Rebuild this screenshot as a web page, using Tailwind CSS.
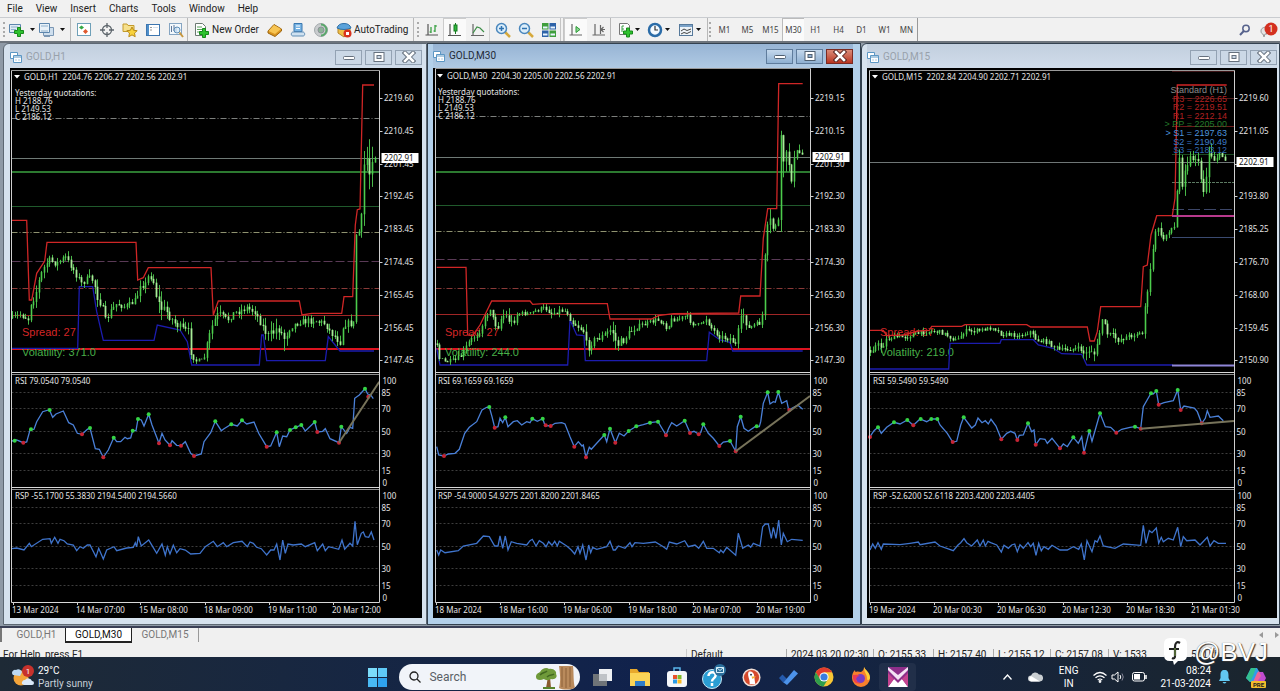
<!DOCTYPE html>
<html lang="en">
<head>
    <meta charset="UTF-8">
    <meta name="viewport" content="width=device-width, initial-scale=1.0">
    <title>MetaTrader - GOLD</title>
    <script src="https://cdn.jsdelivr.net/npm/@tailwindcss/browser@4"></script>
</head>
<body class="min-h-screen flex flex-col bg-[#f0f0f0] text-[#222] text-[10px] leading-3 font-['Roboto',sans-serif] overflow-x-hidden">

    <!-- Menu -->
    <nav class="flex items-center gap-[13px] h-[18px] pl-[7px] bg-[#f1f1f1] border-b border-[#c9ccd0]">
        <a href="#">File</a>
        <a href="#">View</a>
        <a href="#">Insert</a>
        <a href="#">Charts</a>
        <a href="#">Tools</a>
        <a href="#">Window</a>
        <a href="#">Help</a>
    </nav>

    <!-- Toolbar -->
    <div class="flex items-stretch h-[23px] bg-[#f1f1f1]">
        <div class="w-2 pl-[3px] py-1"><div class="h-full border-l-2 border-dotted border-[#aaa]"></div></div>
        <div class="flex pr-0.5">
            <button class="w-[30px] flex items-center gap-0.5" aria-label="New chart">
                <svg class="size-4" viewBox="0 0 16 16"><path d="M1.500 2.500h11v8h-11z" fill="#dfeaf4" stroke="#5c86ad"/><path d="M3 5h7M3 7.500h5" stroke="#8fb0cc"/><path d="M9.500 5.500h3v3h3v3h-3v3h-3v-3h-3v-3h3z" fill="#2ec22e" stroke="#178a1b"/></svg>
                <svg class="w-[5px] h-[3px] ml-1" viewBox="0 0 5 3"><path d="M0 0h5L2.500 3z" fill="#111"/></svg>
            </button>
            <button class="w-[30px] flex items-center gap-0.5" aria-label="Profiles">
                <svg class="size-4" viewBox="0 0 16 16"><path d="M5.500 5.500h10v8h-10z" fill="#cfdfee" stroke="#7b97b4"/><path d="M1.500 1.500h10v9h-10z" fill="#e8f1f8" stroke="#5c86ad"/><path d="M3 9h7M3 4h7" stroke="#8fb0cc"/><path d="M6 14.500h6" stroke="#7b97b4"/></svg>
                <svg class="w-[5px] h-[3px] ml-1" viewBox="0 0 5 3"><path d="M0 0h5L2.500 3z" fill="#111"/></svg>
            </button>
        </div>
        <div class="w-0.5 border-l border-[#b8b8b8]"></div>
        <div class="flex">
            <button class="w-[23px] grid place-items-center" aria-label="Market watch">
                <svg class="size-4" viewBox="0 0 16 16"><rect x="1.500" y="1.500" width="13" height="12" fill="#fff" stroke="#6fa0b8"/><path d="M3 5.500L5.500 3.500 8 5.500 5.500 7.500z" fill="#35a845"/><path d="M7 9.500l2.500-2.500L12 9.500 9.500 12z" fill="#e0592e"/></svg>
            </button>
            <button class="w-[23px] grid place-items-center" aria-label="Data window">
                <svg class="size-4" viewBox="0 0 16 16" fill="none" stroke="#5e666c" stroke-width="1.300"><circle cx="8" cy="8" r="4.500"/><path d="M8 1v5M8 10v5M1 8h5M10 8h5"/></svg>
            </button>
            <button class="w-[23px] grid place-items-center" aria-label="Navigator">
                <svg class="size-4" viewBox="0 0 16 16"><path d="M1 2h4l1 1.500h6v6H1z" fill="#f6e08c" stroke="#c39a2c"/><path d="M10 5l1.600 3.300 3.600.400-2.700 2.400.700 3.600L10 12.900l-3.200 1.800.7-3.600-2.700-2.400 3.600-.4z" fill="#f8d23c" stroke="#b98a16"/></svg>
            </button>
            <button class="w-[23px] grid place-items-center" aria-label="Terminal">
                <svg class="size-4" viewBox="0 0 16 16"><rect x="1.500" y="2.500" width="13" height="11" fill="#fff" stroke="#3d76b0"/><path d="M2 3h2v10H2z" fill="#4f8fca"/><path d="M5.500 5.500h1M5.500 8h1" stroke="#333"/><path d="M8 5.500h5" stroke="#d3dfec"/></svg>
            </button>
            <button class="w-[23px] grid place-items-center" aria-label="Strategy tester">
                <svg class="size-4" viewBox="0 0 16 16"><rect x="1.500" y="1.500" width="12" height="11" fill="#f3f8fc" stroke="#86a5c2"/><path d="M3.500 4v6M6 3v6M8 5v5" stroke="#60789a"/><circle cx="9" cy="8" r="3" fill="#d5eaf8" fill-opacity=".7" stroke="#5d8db8"/><path d="M11.500 10.500L15 15" stroke="#c8973c" stroke-width="2"/></svg>
            </button>
        </div>
        <div class="w-0.5 border-l border-[#b8b8b8]"></div>
        <button class="w-[74px] flex items-center gap-[3px] pl-1">
            <svg class="size-4" viewBox="0 0 16 16"><path d="M2.500 1.500h7l3 3v9h-10z" fill="#fff" stroke="#6c7a72"/><path d="M4 5h5M4 7.500h6M4 10h4" stroke="#5ba25e"/><path d="M9.500 6.500h3v3h3v3h-3v3h-3v-3h-3v-3h3z" fill="#2ec22e" stroke="#178a1b"/></svg>
            New Order
        </button>
        <div class="flex">
            <button class="w-[23px] grid place-items-center" aria-label="MetaEditor">
                <svg class="size-4" viewBox="0 0 16 16"><path d="M1 9l6-6.500 7.500 4.500v2L8 14.500 1 11z" fill="#d9941f" stroke="#9c640e"/><path d="M1.500 9L7 3l7 4-6 5z" fill="#f7c553"/></svg>
            </button>
            <button class="w-[23px] grid place-items-center" aria-label="Signals">
                <svg class="size-4" viewBox="0 0 16 16"><path d="M4 1.500h8v8H4z" fill="#78b4e4" stroke="#3a78b0"/><path d="M6 4h4M6 6.500h4" stroke="#fff"/><path d="M3 10c-2 0-2.500 4 0 4h10c2.500 0 2-4 0-4z" fill="#cfe1f0" stroke="#5f8db5"/></svg>
            </button>
            <button class="w-[23px] grid place-items-center" aria-label="Community">
                <svg class="size-4" viewBox="0 0 16 16"><circle cx="8" cy="8" r="6.500" fill="#c9ccce" stroke="#a3a9ac"/><path d="M8 2.500a5.500 5.500 0 010 11" fill="none" stroke="#59a86a" stroke-width="2"/><circle cx="8" cy="8" r="3" fill="#8fb39a" stroke="#8b9397"/></svg>
            </button>
        </div>
        <button class="w-[81px] flex items-center gap-0.5 pl-1">
            <svg class="size-4" viewBox="0 0 16 16"><path d="M2 6h12v4l-6 5-6-4z" fill="#f0c048" stroke="#b5862a"/><path d="M1 6c1-3 3-4.500 7-4.500S14 3 15 6c-3 2-11 2-14 0z" fill="#5aa2da" stroke="#2f70a8"/><circle cx="11.500" cy="11.500" r="4" fill="#d8321e"/><path d="M10 10h3v3h-3z" fill="#fff"/></svg>
            AutoTrading
        </button>
        <div class="w-0.5 border-l border-[#b8b8b8]"></div>
        <div class="w-[5px] pl-0.5 py-1"><div class="h-full border-l-2 border-dotted border-[#aaa]"></div></div>
        <div class="flex">
            <button class="w-[23px] grid place-items-center" aria-label="Bar chart">
                <svg class="size-4" viewBox="0 0 16 16" fill="none" stroke-width="1.200"><path d="M4 2v11M1.500 13H14" stroke="#555"/><path d="M7 5v6M5.500 10H7M11 3v7M9.500 9H11M11 4h2" stroke="#2a9a35"/></svg>
            </button>
            <button class="w-[23px] grid place-items-center bg-[#fafafa] border-l border-t border-[#ccc]" aria-label="Candlesticks">
                <svg class="size-4" viewBox="0 0 16 16"><path d="M3 2v11M1 13.500h13" stroke="#555" stroke-width="1.200"/><path d="M8.500 1v11" stroke="#157a1e"/><rect x="7" y="3" width="3" height="6" fill="#2fb53c" stroke="#157a1e"/></svg>
            </button>
            <button class="w-[23px] grid place-items-center" aria-label="Line chart">
                <svg class="size-4" viewBox="0 0 16 16" fill="none" stroke-width="1.200"><path d="M3 2v11M1 13.500h13" stroke="#666"/><path d="M3 11l4-6 3 1 4 4" stroke="#3d8e48"/></svg>
            </button>
        </div>
        <div class="w-0.5 border-l border-[#d0d0d0]"></div>
        <div class="flex">
            <button class="w-[23px] grid place-items-center" aria-label="Zoom in">
                <svg class="size-4" viewBox="0 0 16 16"><path d="M9.500 9.500L15 15" stroke="#d6a93c" stroke-width="2.500"/><circle cx="6.500" cy="6.500" r="5" fill="#dceefa" stroke="#4a87bd" stroke-width="1.500"/><path d="M4 6.500h5M6.500 4v5" stroke="#2f72b0" stroke-width="1.500"/></svg>
            </button>
            <button class="w-[23px] grid place-items-center" aria-label="Zoom out">
                <svg class="size-4" viewBox="0 0 16 16"><path d="M9.500 9.500L15 15" stroke="#d6a93c" stroke-width="2.500"/><circle cx="6.500" cy="6.500" r="5" fill="#dceefa" stroke="#4a87bd" stroke-width="1.500"/><path d="M4 6.500h5" stroke="#2f72b0" stroke-width="1.500"/></svg>
            </button>
            <button class="w-[23px] grid place-items-center" aria-label="Tile windows">
                <svg class="size-4" viewBox="0 0 16 16"><rect x="1" y="1" width="6.500" height="6.500" fill="#3f9e3c"/><rect x="8.500" y="1" width="6.500" height="6.500" fill="#2d62a8"/><rect x="1" y="8.500" width="6.500" height="6.500" fill="#2d62a8"/><rect x="8.500" y="8.500" width="6.500" height="6.500" fill="#3f9e3c"/><path d="M2 5.500h4.500M9.500 5.500H14M2 12.500h4.500M9.500 12.500H14" stroke="#e8f4ff" stroke-width="2"/></svg>
            </button>
        </div>
        <div class="w-1 border-x border-[#c4c4c4]"></div>
        <div class="flex">
            <button class="w-[23px] grid place-items-center bg-[#fafafa] border-l border-t border-[#ccc]" aria-label="Auto scroll">
                <svg class="size-4" viewBox="0 0 16 16"><path d="M4 2v11M1.500 13H14" fill="none" stroke="#666" stroke-width="1.200"/><path d="M8 4.500l4 3-4 3z" fill="#8ed694" stroke="#2a9a35"/></svg>
            </button>
            <button class="w-[23px] grid place-items-center" aria-label="Chart shift">
                <svg class="size-4" viewBox="0 0 16 16" fill="none" stroke="#666" stroke-width="1.200"><path d="M4 2v11M1.500 13H14M9.500 3v9M14 7.500H10M12.500 5L10 7.500l2.500 2.500"/></svg>
            </button>
        </div>
        <div class="w-0.5 border-l border-[#b8b8b8]"></div>
        <div class="flex pl-[5px]">
            <button class="w-[30px] flex items-center gap-0.5" aria-label="Indicators">
                <svg class="size-4" viewBox="0 0 16 16"><path d="M2.500 1.500h8l2 2v9h-10z" fill="#fff" stroke="#777"/><path d="M5 4v6M5 4h2M5 7h2" stroke="#3c9e46"/><path d="M9.500 6h3v3h3v3h-3v3h-3v-3h-3V9h3z" fill="#2ec22e" stroke="#178a1b"/></svg>
                <svg class="w-[5px] h-[3px]" viewBox="0 0 5 3"><path d="M0 0h5L2.500 3z" fill="#111"/></svg>
            </button>
            <button class="w-[31px] flex items-center gap-0.5" aria-label="Periods">
                <svg class="size-4" viewBox="0 0 16 16"><circle cx="8" cy="8" r="6" fill="#f4faff" stroke="#2b6ca8" stroke-width="2.500"/><path d="M8 4v4h3" fill="none" stroke="#333" stroke-width="1.200"/></svg>
                <svg class="w-[5px] h-[3px]" viewBox="0 0 5 3"><path d="M0 0h5L2.500 3z" fill="#111"/></svg>
            </button>
            <button class="w-[29px] flex items-center gap-0.5" aria-label="Templates">
                <svg class="size-4" viewBox="0 0 16 16"><rect x="1.500" y="2.500" width="13" height="11" fill="#eef4f9" stroke="#56799b"/><path d="M2 4h12" stroke="#7ba2c8" stroke-width="2"/><path d="M3 9l3-2 3 1.500L13 7M3 12l3-1.500 3 1 4-2" fill="none" stroke="#444"/></svg>
                <svg class="w-[5px] h-[3px]" viewBox="0 0 5 3"><path d="M0 0h5L2.500 3z" fill="#111"/></svg>
            </button>
        </div>
        <div class="w-0.5 border-l border-[#b8b8b8]"></div>
        <div class="w-1 py-1"><div class="h-full border-l-2 border-dotted border-[#aaa]"></div></div>
        <div class="flex text-[8px] text-[#444] font-['Noto_Sans',sans-serif]">
            <button class="w-[23px]">M1</button>
            <button class="w-[23px]">M5</button>
            <button class="w-[23px]">M15</button>
            <button class="w-[22px] bg-[#fafafa] border-l border-t border-[#bbb]">M30</button>
            <button class="w-[23px]">H1</button>
            <button class="w-[23px]">H4</button>
            <button class="w-[23px]">D1</button>
            <button class="w-[23px]">W1</button>
            <button class="w-[21px]">MN</button>
        </div>
        <div class="w-0.5 border-l border-[#999]"></div>
        <button class="ml-auto w-6 grid place-items-center" aria-label="Search">
            <svg class="size-3" viewBox="0 0 12 12" fill="none" stroke="#56628c"><circle cx="7" cy="4.500" r="3.200" stroke-width="1.500"/><path d="M4.800 7L1 11" stroke-width="2"/></svg>
        </button>
        <button class="w-[23px] grid place-items-center" aria-label="Messages">
            <svg class="w-[18px] h-4" viewBox="0 0 18 16"><path d="M1 9c0-3 3-4 6-4v7H5l-1 3-1-3c-1 0-2-1-2-3z" fill="#e4e4e4" stroke="#999"/><circle cx="11" cy="7" r="6.500" fill="#d3301f"/><text x="11" y="10" fill="#fff" font-size="9" text-anchor="middle">1</text></svg>
        </button>
    </div>

    <!-- Chart windows -->
    <main class="flex-1 grid grid-cols-[427fr_434fr_419fr] border-t-2 border-[#6d747c] bg-[#8f9aa6] pb-px">

        <section class="ml-[3px] flex flex-col border border-[#5d6873] rounded-tl-md bg-[#d6e2ee] pl-1.5 pr-1 pb-1.5">
            <header class="flex items-center h-6 pt-0.5 bg-gradient-to-b from-[#c2cfde] to-[#d0dcea] text-[#98a1ab]">
                <svg class="size-3 mr-1" viewBox="0 0 12 12" fill="#fff" stroke="#5c97c4"><path d="M.500 1.500h7v6h-7z"/><path d="M3.500 4.500h8v7h-8z"/><path d="M4 6h7M5.500 9h1M8.500 9h1" /></svg>
                <h2>GOLD,H1</h2>
                <div class="ml-auto flex gap-[3px]">
                    <button class="w-[27px] h-[15px] grid place-items-center border border-[#93a2b3] bg-[#cbd8e6]" aria-label="Minimize"><svg class="w-3 h-2.5" viewBox="0 0 12 10"><rect x=".500" y="4.500" width="11" height="3" rx="1" fill="#fff" stroke="#66717e"/></svg></button>
                    <button class="w-[27px] h-[15px] grid place-items-center border border-[#93a2b3] bg-[#cbd8e6]" aria-label="Maximize"><svg class="w-3 h-2.5" viewBox="0 0 12 10"><rect x="1" y=".500" width="10" height="9" fill="#fff" stroke="#66717e"/><rect x="4" y="3.500" width="4" height="3" fill="#cbd8e6" stroke="#66717e"/></svg></button>
                    <button class="w-[27px] h-[15px] grid place-items-center border border-[#93a2b3] bg-[#cbd8e6]" aria-label="Close"><svg class="w-3.5 h-3" viewBox="0 0 14 12"><path d="M3 2l8 8M11 2L3 10" stroke="#66717e" stroke-width="4.500" stroke-linecap="square"/><path d="M3 2l8 8M11 2L3 10" stroke="#fff" stroke-width="2.500" stroke-linecap="square"/></svg></button>
                </div>
            </header>
            <div class="flex-1 bg-black"><svg id="chartH1" class="block w-full" viewBox="10 68 412 550"></svg></div>
        </section>

        <section class="flex flex-col border border-[#33414f] bg-[#b3d0ea] pl-[5px] pr-[7px] pb-1.5">
            <header class="flex items-center h-6 bg-gradient-to-b from-[#97b4d4] to-[#b0cae4] text-[#1f2a36]">
                <svg class="size-3 mr-1" viewBox="0 0 12 12" fill="#fff" stroke="#5c97c4"><path d="M.500 1.500h7v6h-7z"/><path d="M3.500 4.500h8v7h-8z"/><path d="M4 6h7M5.500 9h1M8.500 9h1" /></svg>
                <h2>GOLD,M30</h2>
                <div class="ml-auto flex gap-[3px]">
                    <button class="w-[27px] h-[15px] grid place-items-center border border-[#5f7c9c] bg-gradient-to-b from-[#c4d8ec] to-[#8fb0d2]" aria-label="Minimize"><svg class="w-3 h-2.5" viewBox="0 0 12 10"><rect x=".500" y="4.500" width="11" height="3" rx="1" fill="#fff" stroke="#4f5f70"/></svg></button>
                    <button class="w-[27px] h-[15px] grid place-items-center border border-[#5f7c9c] bg-gradient-to-b from-[#c4d8ec] to-[#8fb0d2]" aria-label="Maximize"><svg class="w-3 h-2.5" viewBox="0 0 12 10"><rect x="1" y=".500" width="10" height="9" fill="#fff" stroke="#4f5f70"/><rect x="4" y="3.500" width="4" height="3" fill="#8fb0d2" stroke="#4f5f70"/></svg></button>
                    <button class="w-[27px] h-[15px] grid place-items-center border border-[#7a2a22] bg-gradient-to-b from-[#d98a78] to-[#b8321e]" aria-label="Close"><svg class="w-3.5 h-3" viewBox="0 0 14 12"><path d="M3 2l8 8M11 2L3 10" stroke="#5b2a26" stroke-width="4.500" stroke-linecap="square"/><path d="M3 2l8 8M11 2L3 10" stroke="#fff" stroke-width="2.500" stroke-linecap="square"/></svg></button>
                </div>
            </header>
            <div class="flex-1 bg-black"><svg id="chartM30" class="block w-full" viewBox="433 68 420 550"></svg></div>
        </section>

        <section class="flex flex-col border border-[#33414f] rounded-tl-md bg-[#d6e2ee] pl-[5px] pr-0.5 pb-1.5">
            <header class="flex items-center h-6 pt-0.5 bg-gradient-to-b from-[#c2cfde] to-[#d0dcea] text-[#98a1ab]">
                <svg class="size-3 mr-1" viewBox="0 0 12 12" fill="#fff" stroke="#5c97c4"><path d="M.500 1.500h7v6h-7z"/><path d="M3.500 4.500h8v7h-8z"/><path d="M4 6h7M5.500 9h1M8.500 9h1" /></svg>
                <h2>GOLD,M15</h2>
                <div class="ml-auto flex gap-[3px]">
                    <button class="w-[27px] h-[15px] grid place-items-center border border-[#93a2b3] bg-[#cbd8e6]" aria-label="Minimize"><svg class="w-3 h-2.5" viewBox="0 0 12 10"><rect x=".500" y="4.500" width="11" height="3" rx="1" fill="#fff" stroke="#66717e"/></svg></button>
                    <button class="w-[27px] h-[15px] grid place-items-center border border-[#93a2b3] bg-[#cbd8e6]" aria-label="Maximize"><svg class="w-3 h-2.5" viewBox="0 0 12 10"><rect x="1" y=".500" width="10" height="9" fill="#fff" stroke="#66717e"/><rect x="4" y="3.500" width="4" height="3" fill="#cbd8e6" stroke="#66717e"/></svg></button>
                    <button class="w-[27px] h-[15px] grid place-items-center border border-[#93a2b3] bg-[#cbd8e6]" aria-label="Close"><svg class="w-3.5 h-3" viewBox="0 0 14 12"><path d="M3 2l8 8M11 2L3 10" stroke="#66717e" stroke-width="4.500" stroke-linecap="square"/><path d="M3 2l8 8M11 2L3 10" stroke="#fff" stroke-width="2.500" stroke-linecap="square"/></svg></button>
                </div>
            </header>
            <div class="flex-1 bg-black"><svg id="chartM15" class="block w-full" viewBox="867 68 410 550"></svg></div>
        </section>
    </main>

    <!-- Chart tabs -->
    <div class="flex items-start h-[18px] border-t-2 border-[#3a3f55] text-[#777]">
        <button class="w-[65px] h-[14px] pl-1.5 border-l-2 border-[#777]">GOLD,H1</button>
        <button class="w-[67px] h-[15px] bg-white text-[#111] border-x border-b-2 border-[#222]">GOLD,M30</button>
        <button class="w-[67px] h-[14px] border-r border-[#999]">GOLD,M15</button>
        <div class="ml-auto flex gap-3 pt-1 pr-px">
            <button aria-label="Scroll tabs left"><svg class="w-1 h-1.5" viewBox="0 0 4 6"><path d="M4 0v6L0 3z" fill="#999"/></svg></button>
            <button aria-label="Scroll tabs right"><svg class="w-1 h-1.5" viewBox="0 0 4 6"><path d="M0 0v6l4-3z" fill="#999"/></svg></button>
        </div>
    </div>

    <!-- Status bar -->
    <footer class="relative">
        <div class="flex h-[13px] overflow-hidden pt-[5px] pl-[3px] text-[#222]">
            <span class="flex-1">For Help, press F1</span>
            <span class="w-[100px] pl-1 border-l border-[#ccc]">Default</span>
            <span class="w-[87px] pl-1 border-l border-[#aaa] whitespace-nowrap">2024.03.20 02:30</span>
            <span class="w-[60px] pl-1 border-l border-[#aaa]">O: 2155.33</span>
            <span class="w-[60px] pl-1 border-l border-[#aaa]">H: 2157.40</span>
            <span class="w-[57px] pl-1 border-l border-[#aaa]">L: 2155.12</span>
            <span class="w-[58px] pl-1 border-l border-[#aaa]">C: 2157.08</span>
            <span class="w-[56px] pl-1 border-l border-[#aaa]">V: 1533</span>
            <span class="w-[116px] pl-[26px] border-l border-[#aaa]">5/0 kb</span>
        </div>
        <!-- Author mark floating over the status bar -->
        <div class="absolute right-3 -top-1.5 z-10 flex items-center gap-1.5 text-white">
            <svg class="w-[25px] h-[27px]" viewBox="0 0 25 27"><path d="M7 0h11q6 0 6 6v11q0 6-6 6h-3l-4 4-1-4H7q-6 0-6-6V6q0-6 6-6z" fill="#fff"/><path d="M17 5c-3-2-5 0-5 4v9c0 2-1 3-3 2M6 11h10" fill="none" stroke="#222" stroke-width="2.200"/><path d="M12 10v8" stroke="#7ea84a"/></svg>
            <span class="text-[26px] leading-6 font-['Liberation_Sans',sans-serif] [text-shadow:1px_1px_1px_#333,0_0_1px_#555]">@BVJ</span>
        </div>
    </footer>

    <!-- Taskbar -->
    <div class="grid grid-cols-[366fr_550fr_364fr] h-[34px] bg-gradient-to-r from-[#1e2a36] via-[#11224c] to-[#1b252d] text-white">
        <div class="flex items-center gap-1.5 pl-3 pt-1.5">
            <svg class="w-[22px] h-6" viewBox="0 0 22 24"><circle cx="9" cy="13" r="7.500" fill="#f3a43a"/><path d="M1 10a3 3 0 013-5 4 4 0 016 2l-2 4z" fill="#bcd8f2"/><path d="M10 19a3 3 0 013-4 4 4 0 017 1 2 2 0 010 4h-8z" fill="#dbe9f8"/><circle cx="16" cy="6" r="6" fill="#c7322c"/><text x="16" y="9" fill="#fff" font-size="8" text-anchor="middle">1</text></svg>
            <div class="leading-[13px] -ml-0.5">
                <div>29°C</div>
                <div class="text-[#c8d0d8]">Partly sunny</div>
            </div>
        </div>

        <div class="flex items-center pl-0.5 pt-1.5">
            <button class="mr-3 ml-px" aria-label="Start">
                <svg class="size-[19px]" viewBox="0 0 19 19" fill="#49b9f4"><path d="M0 0h9v9H0z" fill="#7cdcfa"/><path d="M10 0h9v9h-9z" fill="#5fcaf8"/><path d="M0 10h9v9H0z"/><path d="M10 10h9v9h-9z" fill="#2fa2ee"/></svg>
            </button>
            <label class="flex items-center w-[181px] h-[26px] pl-2.5 pr-0.5 rounded-full bg-[#f1f4f9] overflow-hidden">
                <svg class="size-3 shrink-0" viewBox="0 0 12 12" fill="none" stroke="#222" stroke-width="1.300"><circle cx="5" cy="5" r="4"/><path d="M8 8l3.500 3.500"/></svg>
                <input type="text" placeholder="Search" aria-label="Search" class="flex-1 min-w-0 ml-2 text-[12px] bg-transparent text-[#444] placeholder:text-[#5a5f66] outline-none">
                <svg class="w-[43px] h-[25px] shrink-0" viewBox="0 0 43 25"><path d="M24 1h14c1 7 0 15 2 22-4 2-12 2-16 0 2-7 1-15 0-22z" fill="#b98a5c"/><path d="M27 2v20M31 3v20M35 2v20" stroke="#8c6038"/><path d="M13 12l-2 11h5l-1-11z" fill="#8a5b2e"/><path d="M1 12c0-4 3-4 4-5 2-4 7-5 9-3 5-1 8 3 7 5 2 3-1 6-5 5-3 2-6 1-7 0-4 2-8 1-8-2z" fill="#6f9a3a"/><path d="M5 10c3-3 5-2 7-4M12 12c3-3 5-1 7-3" stroke="#426820" fill="none" stroke-width="1.500"/><path d="M8 23h12" stroke="#58842c" stroke-width="2"/></svg>
            </label>
            <div class="flex ml-1">
                <button class="w-[37px] grid place-items-center" aria-label="Task view"><svg class="size-5" viewBox="0 0 20 20"><rect x="0" y="7" width="14" height="12" fill="#6f7478"/><rect x="6" y="2" width="13" height="12" fill="#eef0f2"/><path d="M6 7h8v7H6z" fill="#bfc3c7"/></svg></button>
                <button class="w-[37px] grid place-items-center" aria-label="Explorer"><svg class="size-5" viewBox="0 0 20 20"><path d="M0 2h7l2 3h10v14H0z" fill="#e8a92c"/><path d="M0 6h20v13H0z" fill="#fbd457"/><path d="M5 19v-5h10v5z" fill="#2f7dc9"/></svg></button>
                <button class="w-[37px] grid place-items-center" aria-label="Store"><svg class="size-5" viewBox="0 0 20 20"><path d="M7 5V1h6v4" fill="none" stroke="#59b5ea" stroke-width="1.500"/><rect x="0" y="4" width="20" height="16" rx="3" fill="#f5f7fa"/><path d="M6 8h4v4H6z" fill="#e9512b"/><path d="M10.500 8h4v4h-4z" fill="#7fba2a"/><path d="M6 12.500h4v4H6z" fill="#2a9ce8"/><path d="M10.500 12.500h4v4h-4z" fill="#fbb924"/></svg></button>
                <button class="w-[38px] grid place-items-center" aria-label="Help"><svg class="w-6 h-[26px]" viewBox="0 0 24 26"><circle cx="10" cy="15" r="9.500" fill="#2a9ed4" stroke="#c7e8f6"/><path d="M6.500 12c0-5 8-5 7 0-.500 2.500-3.500 2.500-3.500 5.500M10 19v3" fill="none" stroke="#fff" stroke-width="2.500"/><circle cx="18" cy="6" r="6" fill="#2b6f9c"/><path d="M14.500 3.500h7v5h-7zl3.500 3 3.500-3" fill="none" stroke="#d7f0fb"/></svg></button>
                <button class="w-9 grid place-items-center" aria-label="DuckDuckGo"><svg class="size-[19px]" viewBox="0 0 20 20"><circle cx="10" cy="10" r="9.500" fill="#f2dfd6"/><circle cx="10" cy="10" r="8" fill="#d6492b"/><path d="M7 4c4-1 6 2 6 6l1 7H8C9 13 5 8 7 4z" fill="#fff"/><path d="M10 9h5l-4 2.500z" fill="#f5b731"/><circle cx="9.500" cy="7" r="1" fill="#234"/></svg></button>
                <button class="w-[37px] grid place-items-center" aria-label="To Do"><svg class="size-5" viewBox="0 0 20 20"><path d="M1 11l3.500-3.500L9 12l-3.500 4z" fill="#2459ab"/><path d="M5.500 15.500L16 3l4 3.500L9 18z" fill="#4d93ea"/></svg></button>
                <button class="w-9 grid place-items-center" aria-label="Chrome"><svg class="size-5" viewBox="0 0 20 20"><circle cx="10" cy="10" r="9.500" fill="#f9c734"/><path d="M1.800 5.200A9.500 9.500 0 0118.200 5.200H10L6 12.500z" fill="#e23c2e"/><path d="M1.800 5.200A9.500 9.500 0 009.500 19.500L14 12l-8 0z" fill="#2f9e4c"/><circle cx="10" cy="10" r="4.600" fill="#fff"/><circle cx="10" cy="10" r="3.600" fill="#3b7de0"/></svg></button>
                <button class="w-[37px] grid place-items-center" aria-label="Firefox"><svg class="size-5" viewBox="0 0 20 20"><path d="M13 0c1 3 6 5 6 11a9 9 0 01-18 0c0-4 1-6 3-8 0 2 1 2 1 2 2-1 3 0 5 0 2-1 3-3 3-5z" fill="#f8802c"/><path d="M13 0c1 3 6 5 6 11-1 3-3 3-3 0 0-4-3-5-3-11z" fill="#fbd03a"/><circle cx="9.500" cy="11.500" r="4.500" fill="#7a3cc4"/><path d="M2 8c2 0 4-1 7 1-3 0-3 1-4 3 0 3 3 4 5 4-5 2-9-2-8-8z" fill="#ee3a54"/></svg></button>
                <button class="w-[37px] h-7 grid place-items-center bg-white/5 rounded" aria-label="MetaTrader"><svg class="size-5" viewBox="0 0 20 20"><path d="M0 0h20v20H0z" fill="#8e2f8a"/><path d="M0 0l10 8L20 0v3L10 13 0 3z" fill="#f4e3f4"/><path d="M0 20l6-8 4 4 4-4 6 8z" fill="#fff"/><path d="M0 6l6 6-6 8zM20 6l-6 6 6 8z" fill="#c5428f"/></svg></button>
            </div>
        </div>

        <div class="flex items-center justify-end pr-3.5 pt-1.5">
            <svg class="w-[9px] h-1.5 mr-3" viewBox="0 0 9 6" fill="none" stroke="#fff" stroke-width="1.300"><path d="M.500 5.500l4-4.500 4 4.500"/></svg>
            <svg class="w-[15px] h-2.5 mr-4 ml-1" viewBox="0 0 15 10"><path d="M3 9.500a3 3 0 010-6 4.500 4.500 0 018-1 3.500 3.500 0 011 7z" fill="#c9ced2"/><path d="M3 4l9 5.500H3a3 3 0 010-5.500z" fill="#fff"/></svg>
            <div class="text-center leading-[13px] mr-3.5">
                <div>ENG</div>
                <div>IN</div>
            </div>
            <svg class="w-[14px] h-3 mr-1" viewBox="0 0 14 12" fill="none" stroke="#fff" stroke-width="1.200"><path d="M.500 4.500q6.500-6 13 0M2.500 6.800q4.500-4 9 0M4.700 9q2.300-2 4.600 0"/><circle cx="7" cy="10.500" r=".8"/></svg>
            <svg class="w-[15px] h-3 mr-1.5" viewBox="0 0 15 12" fill="none" stroke="#fff"><path d="M1 4h2.500L7 1v10L3.500 8H1z"/><path d="M9 4q1.500 2 0 4"/><path d="M11 2.500q2.500 3.500 0 7" stroke="#889"/></svg>
            <svg class="w-[15px] h-2.5 mr-3.5" viewBox="0 0 15 10"><rect x=".500" y=".500" width="12" height="8.500" rx="2" fill="none" stroke="#fff"/><rect x="2" y="2" width="6" height="5.500" fill="#fff"/><path d="M14 3v4" stroke="#fff" stroke-width="1.500"/></svg>
            <div class="text-right leading-[13px] mr-2">
                <div>08:24</div>
                <div>21-03-2024</div>
            </div>
            <svg class="w-[11px] h-[14px] mr-4" viewBox="0 0 11 14" fill="#62c8f2"><path d="M5.500 0C8.500 0 9.500 2 9.500 5v3l1.500 3H0l1.500-3V5c0-3 1-5 4-5z"/><path d="M3.500 12h4q-2 3-4 0z"/></svg>
            <svg class="w-5 h-[21px]" viewBox="0 0 20 21"><path d="M5 1h6l3 5-5 9H4L0 11z" fill="#2f9ee8"/><path d="M5 1h5L7 9 4 15 0 11z" fill="#34c08f"/><path d="M12 5h5l3 6-3 6H8z" fill="#c24bd0"/><path d="M13 4l2 5-4 6H7l4-9z" fill="#e9679a"/><rect x="5" y="14" width="15" height="7" rx="1" fill="#f3bd2c"/><text x="12.500" y="20" fill="#222" font-size="6" font-weight="bold" text-anchor="middle">PRE</text></svg>
        </div>
    </div>

    <script>
        // Chart data. Points are in thirds of a chart unit: price panel starts at y=65, indicator panels at y=370.
        const charts = [
            {
                id: "chartH1", ox: 0, left: 11.5, right: 379.5, top: 70.5, titleY: 80, textX: 15,
                title: "GOLD,H1\u00a0 2204.76 2206.27 2202.56 2202.91",
                prices: ["2219.60", "2210.45", "2201.45", "2192.45", "2183.45", "2174.45", "2165.45", "2156.45", "2147.45"],
                lastY: 280, volatility: "Volatility: 371.0", spread: "Spread: 27",
                levels: [160, 280, 321, 424, 502, 587, 670, 751, 851],
                times: ["13 Mar 2024", "14 Mar 07:00", "15 Mar 08:00", "18 Mar 09:00", "19 Mar 11:00", "20 Mar 12:00"],
                ticks: [38, 230, 421, 616, 808, 1000],
                price: "36,758,14 60,748,14 85,762,16 92,715,14 104,695,20 118,640,25 130,610,20 145,585,20 170,595,18 195,575,16 215,605,18 235,640,20 245,655,16 265,638,18 280,645,22 290,690,25 305,720,25 315,770,25 330,740,18 350,715,15 370,725,12 390,718,18 410,700,15 418,655,20 435,660,20 448,625,22 462,655,18 472,710,35 485,730,35 500,740,28 520,770,22 545,790,22 565,800,22 572,860,20 585,887,10 610,885,10 622,830,20 640,770,25 655,745,22 680,765,22 700,745,18 740,728,18 765,740,18 785,780,20 805,815,28 835,785,35 850,820,45 870,785,20 900,770,16 940,765,20 975,775,18 990,800,18 1020,830,20 1030,775,22 1060,775,18 1067,510,20 1076,500,30 1084,460,30 1092,300,50 1100,280,50 1108,320,60 1115,260,70 1124,272,20",
                upper: "36,466 80,466 88,705 95,705 110,625 134,588 141,532 408,532 413,645 430,638 445,608 633,608 640,750 655,708 898,708 906,750 935,745 1025,745 1032,695 1058,695 1066,480 1072,434 1080,432 1088,60 1122,60",
                lower: "36,850 233,850 238,665 278,665 290,740 310,826 462,826 472,780 540,795 562,830 575,900 778,900 785,810 790,810 800,887 976,887 985,815 1020,858 1122,858",
                rsiLabel: "RSI 79.0540 79.0540",
                rsi: "36,213 50,210 70,218 80,216 90,180 102,178 110,155 128,125 148,119 158,142 168,132 190,123 206,158 220,165 232,190 246,193 262,178 270,174 286,236 298,238 310,262 325,240 341,203 350,215 362,215 375,202 382,206 392,204 398,182 408,182 414,147 424,150 432,168 446,133 456,165 477,220 486,190 495,210 510,226 516,212 530,226 543,227 556,215 572,250 582,258 604,252 612,215 632,188 646,154 664,182 672,176 694,163 712,168 726,151 740,162 762,156 776,190 800,230 812,228 830,187 838,230 848,198 860,200 870,180 887,172 904,165 916,183 944,156 952,186 968,184 976,176 990,206 1017,218 1024,170 1040,190 1050,172 1058,175 1064,85 1078,75 1095,56 1103,72 1112,75 1120,86",
                highs: "44,212 93,178 149,120 270,174 341,203 398,182 414,147 446,133 646,154 694,163 726,151 830,187 870,180 887,172 904,165 944,156 1024,170 1095,56",
                lows: "70,218 246,193 310,262 477,220 510,226 543,227 582,258 800,230 952,186 1017,218 1105,80",
                trend: "1017,218 1138,35",
                rspLabel: "RSP -55.1700 55.3830 2194.5400 2194.5660",
                rsp: "36,536 50,534 72,540 88,520 94,530 128,508 150,506 154,520 164,502 174,520 180,508 192,512 202,522 220,525 230,542 240,530 250,535 262,525 270,525 288,560 296,535 310,567 320,540 342,530 350,542 380,534 400,532 406,518 410,530 415,500 424,528 446,510 458,530 470,550 486,522 496,556 502,530 510,552 520,526 530,548 540,536 556,540 572,552 600,550 616,530 640,514 652,530 670,518 680,530 700,518 726,514 742,530 750,516 760,520 770,532 784,536 800,555 812,540 822,540 830,522 840,570 848,510 856,550 864,522 880,525 904,522 916,530 944,518 952,542 968,522 976,542 986,530 1016,538 1026,510 1034,538 1050,520 1058,528 1065,454 1072,524 1084,490 1090,486 1096,500 1106,502 1114,486 1122,510"
            },
            {
                id: "chartM30", ox: 430, left: 435.5, right: 810.5, top: 68.5, titleY: 79, textX: 438,
                title: "GOLD,M30\u00a0 2204.30 2205.00 2202.56 2202.91",
                prices: ["2219.15", "2210.15", "2201.30", "2192.30", "2183.30", "2174.30", "2165.30", "2156.30", "2147.30"],
                lastY: 277, volatility: "Volatility: 244.0", spread: "Spread: 27",
                levels: [154, 276, 320, 421, 498, 583, 670, 748, 852],
                times: ["18 Mar 2024", "18 Mar 16:00", "19 Mar 06:00", "19 Mar 18:00", "20 Mar 07:00", "20 Mar 19:00"],
                ticks: [19, 211, 403, 596, 789, 982],
                price: "20,835,16 28,880,14 45,890,10 75,885,12 95,870,16 105,850,14 120,825,12 145,805,14 160,770,14 180,730,14 192,775,16 205,785,14 215,750,24 230,755,28 245,775,28 262,745,12 300,745,10 320,735,12 345,728,14 365,745,16 390,735,12 410,740,10 425,770,16 445,785,14 462,800,14 470,850,30 490,825,18 515,815,18 535,800,22 545,790,28 560,840,28 580,825,22 600,800,18 620,785,14 650,775,12 680,763,12 700,772,14 712,790,14 725,762,12 745,762,12 770,752,12 785,775,12 810,780,10 828,760,14 845,790,14 870,815,14 900,820,16 918,840,14 928,770,20 940,750,24 955,790,16 975,778,12 995,772,14 1003,600,40 1009,500,30 1020,470,30 1027,490,20 1045,465,15 1052,240,60 1062,290,50 1072,270,40 1085,340,30 1095,280,70 1103,260,20 1118,268,14",
                upper: "20,607 108,607 113,810 128,812 150,780 185,708 300,708 308,718 340,716 532,716 540,762 665,762 685,752 730,746 926,744 932,693 990,693 1000,520 1013,431 1040,431 1046,56 1118,56",
                lower: "20,850 30,900 413,900 420,765 440,810 462,812 466,887 830,887 838,802 870,825 900,832 908,858 1118,858",
                rsiLabel: "RSI 69.1659 69.1659",
                rsi: "20,230 26,255 42,258 55,252 75,250 88,238 104,190 118,172 140,155 156,120 170,112 178,111 186,140 194,173 204,170 210,145 218,158 226,142 234,170 250,155 262,152 275,165 290,155 300,158 307,146 322,154 330,150 338,146 345,166 362,168 375,160 395,158 405,162 420,200 433,230 445,215 456,228 460,225 468,262 478,232 484,238 500,220 523,195 530,215 540,176 556,218 568,190 582,198 596,183 619,169 640,164 660,158 684,155 708,195 716,175 725,158 740,168 764,152 780,188 792,184 806,193 812,188 820,163 835,190 850,205 868,228 880,216 900,213 917,244 922,170 932,140 942,175 955,184 975,170 988,170 992,155 1000,100 1013,67 1020,102 1030,95 1036,97 1045,66 1055,100 1070,92 1076,120 1095,110 1104,106 1118,118",
                highs: "178,111 226,142 307,146 338,146 523,195 540,176 596,183 619,169 660,158 684,155 764,152 820,163 900,213 932,140 980,169 1013,67 1045,66",
                lows: "42,258 194,173 347,166 362,168 433,230 468,262 556,218 708,196 780,189 806,193 868,228 917,244 1078,120",
                trend: "917,244 1140,78",
                rspLabel: "RSP -54.9000 54.9275 2201.8200 2201.8465",
                rsp: "20,540 26,555 32,540 45,548 85,542 100,528 140,520 160,498 178,500 194,528 204,528 210,498 218,535 226,498 234,540 244,515 260,520 290,525 300,512 307,508 318,528 328,512 340,520 348,530 356,515 366,526 374,514 382,528 388,514 410,528 424,540 434,552 444,530 450,550 458,525 468,570 476,525 482,548 488,532 500,538 530,530 540,514 550,540 556,540 565,528 585,535 600,518 606,530 615,518 640,520 676,516 700,530 710,538 718,516 740,522 764,512 775,530 795,525 806,535 820,514 830,535 850,535 868,548 872,540 880,548 890,532 917,556 925,490 938,535 955,525 962,532 970,520 990,528 998,470 1006,462 1015,462 1024,505 1030,472 1038,505 1046,450 1054,525 1060,490 1072,515 1085,508 1118,511"
            },
            {
                id: "chartM15", ox: 860, left: 869.5, right: 1234.5, top: 70.5, titleY: 80, textX: 873,
                title: "GOLD,M15\u00a0 2202.84 2204.90 2202.71 2202.91",
                prices: ["2219.60", "2211.05", "", "2193.80", "2185.25", "2176.70", "2168.00", "2159.45", "2150.90"],
                lastY: 292, volatility: "Volatility: 219.0", spread: "Spread: 27",
                levels: null,
                times: ["19 Mar 2024", "20 Mar 00:30", "20 Mar 06:30", "20 Mar 12:30", "20 Mar 18:30", "21 Mar 01:30"],
                ticks: [31, 223, 415, 609, 801, 995],
                price: "30,855,16 50,840,20 65,845,20 80,820,14 110,815,12 140,815,12 170,805,12 215,798,10 240,800,10 265,812,12 290,828,12 312,798,14 335,798,12 360,795,10 400,787,8 425,808,12 450,808,10 480,812,10 510,800,12 530,825,14 560,830,12 600,855,12 625,852,12 660,850,12 675,870,24 690,850,20 705,870,24 715,820,20 727,755,16 740,805,14 755,810,16 775,825,14 800,815,14 830,805,14 848,805,12 856,690,20 864,690,30 875,560,30 882,530,20 892,470,15 898,515,20 910,520,16 930,490,14 946,485,14 955,250,30 965,350,40 975,300,30 990,280,28 1010,275,18 1020,330,30 1032,380,25 1042,300,40 1048,240,60 1058,285,16 1080,268,12 1098,285,12",
                upper: "30,796 70,796 80,812 130,810 175,798 208,796 215,784 305,784 315,779 500,779 512,786 682,786 690,828 703,828 712,800 722,725 842,725 850,605 862,600 873,510 890,452 937,452 945,400 952,60 1100,60",
                lower: "30,912 266,912 270,835 420,835 424,824 520,824 535,840 580,850 605,866 665,868 680,900 938,900",
                rsiLabel: "RSI 59.5490 59.5490",
                rsi: "30,200 42,182 54,172 64,190 80,172 102,157 120,162 142,150 160,166 180,147 200,155 214,147 232,147 240,165 262,190 278,216 290,214 302,165 311,142 335,174 346,165 354,144 366,158 376,152 385,162 393,148 408,168 424,208 440,190 452,184 465,190 472,210 478,196 490,195 504,160 515,185 522,180 527,224 540,206 555,208 562,220 576,205 600,235 610,222 622,230 640,202 655,220 665,200 672,248 688,183 696,214 720,130 736,170 752,172 769,188 785,178 810,172 825,170 842,176 850,110 873,70 880,72 889,63 896,104 912,98 940,92 953,60 962,120 972,108 1003,114 1012,125 1025,160 1036,145 1042,122 1050,142 1075,138 1090,152",
                highs: "54,172 102,157 142,150 182,147 214,147 232,147 311,142 504,160 640,202 688,183 720,130 825,170 873,70 889,63 953,60",
                lows: "30,201 160,166 278,216 424,208 472,210 527,224 600,235 672,248 769,188 842,176 896,104 962,120 1025,160",
                trend: "842,176 1122,153",
                rspLabel: "RSP -52.6200 52.6118 2203.4200 2203.4405",
                rsp: "30,540 38,522 46,535 54,518 64,538 70,522 120,524 150,520 175,516 180,524 225,516 240,528 280,542 294,525 302,518 312,506 320,518 335,528 352,510 360,528 370,510 376,528 384,514 392,518 410,525 424,546 432,526 445,535 455,525 464,522 472,545 480,524 490,535 504,518 512,530 520,520 528,556 536,520 544,542 552,530 565,538 576,526 600,540 622,540 640,530 656,538 664,522 673,570 681,512 696,545 705,512 712,516 720,498 730,528 765,535 790,522 842,526 850,466 858,520 868,482 876,488 889,474 896,520 904,502 910,515 925,505 940,510 953,472 962,530 970,500 980,512 1005,510 1020,525 1042,502 1050,528 1062,512 1075,520 1098,520"
            }
        ];

        const levelStyles = [
            ["#7c7f7c", 1, "6 2 1 2"], ["#6f7a76", 1, ""], ["#2c7a30", 2, ""], ["#205a2c", 1, ""],
            ["#8f9270", 1, "6 2 1 2"], ["#5a3a56", 1, "9 3"], ["#8a3a38", 1, "6 2 1 2"], ["#a02626", 1, ""], ["#dc1420", 2, ""]
        ];

        let seed = 7;
        function rnd() {
            seed = (seed * 16807) % 2147483647;
            return seed / 2147483647;
        }

        const parse = s => s.split(" ").map(p => p.split(",").map(Number));
        const scale = (s, ox, oy) => parse(s).map(([x, y]) => [(ox + x / 3).toFixed(1), (oy + y / 3).toFixed(1)]);
        const poly = (s, ox, oy, color, w) => `<polyline points="${scale(s, ox, oy).join(" ")}" fill="none" stroke="${color}" stroke-width="${w}"/>`;
        const line = (x1, y1, x2, y2, color, w = 1, dash = "") => `<path d="M${x1} ${y1}L${x2} ${y2}" stroke="${color}" stroke-width="${w}" stroke-dasharray="${dash}"/>`;
        const text = (x, y, t, color = "#e4e4e4", extra = "") => `<text x="${x}" y="${y}" fill="${color}" ${extra}>${t}</text>`;
        const dots = (s, ox, color) => scale(s, ox, 370).map(([x, y]) => `<circle cx="${x}" cy="${y}" r="2" fill="${color}"/>`).join("");

        function candles(c) {
            const pts = parse(c.price);
            let out = "", prev = pts[0][1], i = 0;
            for (let x = pts[0][0]; x <= pts[pts.length - 1][0]; x += 8) {
                while (i < pts.length - 2 && pts[i + 1][0] < x) i++;
                const a = pts[i], b = pts[i + 1];
                const t = Math.max(0, Math.min(1, (x - a[0]) / (b[0] - a[0])));
                const amp = a[2] + (b[2] - a[2]) * t;
                const close = a[1] + (b[1] - a[1]) * t + (rnd() - 0.5) * amp;
                const hi = Math.min(prev, close) - rnd() * amp;
                const lo = Math.max(prev, close) + rnd() * amp;
                const px = Math.round(c.ox + x / 3) + 0.5;
                out += line(px, 65 + hi / 3, px, 65 + lo / 3, "#48b848");
                out += line(px, 65 + Math.min(prev, close) / 3, px, 65 + Math.max(prev, close) / 3 + 0.5, close > prev ? "#a8ec98" : "#4ccc4c", close > prev ? 1.8 : 1.6);
                prev = close;
            }
            return out;
        }

        charts.forEach(c => {
            const L = c.left, R = c.right;
            let s = "";

            // Horizontal price levels
            if (c.levels) {
                c.levels.forEach((level, i) => {
                    const y = Math.round(65 + level / 3) + (levelStyles[i][1] === 1 ? 0.5 : 0);
                    s += line(L, y, R, y, ...levelStyles[i]);
                });
            } else {
                s += line(L, 162.5, R, 162.5, "#6f7676");
                s += line(1172, 71, R, 71, "#7a2a2e") + line(1172, 98.5, R, 98.5, "#4c1c1c") + line(1172, 126.5, R, 126.5, "#6b1a1a") + line(1172, 154.5, R, 154.5, "#1c4a22");
                s += line(1172, 182.5, R, 182.5, "#5c7a62", 1, "3 1") + line(1172, 209.5, R, 209.5, "#3c4668", 1, "12 4");
                s += line(1172, 237.5, R, 237.5, "#3a4a70");
            }

            s += text(c.textX + 7, 336, c.spread, "#d42626", `font-family="Liberation Sans, sans-serif" font-size="11"`);
            s += text(c.textX + 7, 356, c.volatility, "#48b048", `font-family="Liberation Sans, sans-serif" font-size="11"`);
            s += poly(c.lower, c.ox, 65, "#1c1cae", 1.3);
            s += candles(c);
            s += poly(c.upper, c.ox, 65, "#cf2626", 1.3);

            // Pivot table on the M15 chart
            if (!c.levels) {
                s += line(1172, 216, R, 216, "#b83a8c", 2) + line(1172, 365.5, R, 365.5, "#8f86d8", 2);
                const pivots = [["Standard (H1)", "#8a8a8a"], ["R3 = 2226.65", "#b02020"], ["R2 = 2219.51", "#b02020"], ["R1 = 2212.14", "#b02020"], ["&gt; PP = 2205.00", "#237a2a"], ["&gt; S1 = 2197.63", "#4d94dc"], ["S2 = 2190.49", "#3d7cc8"], ["S3 = 2183.12", "#2f68b4"]];
                pivots.forEach(([t, col], i) => s += text(1227, 93 + Math.round(i * 8.6), t, col, `text-anchor="end" font-family="Liberation Sans, sans-serif" font-size="9"`));
            }

            // Title and yesterday's quotations
            s += `<path d="M${c.textX - 1} ${c.titleY - 5}h6l-3 3.500z" fill="#fff"/>` + text(c.textX + 9, c.titleY, c.title);
            if (c.levels) {
                ["Yesterday quotations:", "H 2188.76", "L 2149.53", "C 2186.12"].forEach((t, i) => s += text(c.textX, c.titleY + 16 + i * 8, t));
            }

            // Indicator panels
            [[374.5, 487.5, [392.5, 408.5, 431.5, 453.5, 470.5]], [489.5, 602.5, [507.5, 523.5, 546.5, 568.5, 585.5]]].forEach(([top, bottom, rows]) => {
                rows.forEach((y, i) => {
                    s += line(L, y, R, y, "#3d3d3d", 1, "2 2");
                    s += text(R + 2, y + 3, [85, 70, 50, 30, 15][i]);
                });
                s += text(R + 3, top + 9, "100") + text(R + 3, bottom - 2, "0");
                s += line(L, top, R, top, "#8c8c8c") + line(L, bottom, R, bottom, "#d8d8d8");
            });
            s += text(c.textX, 384, c.rsiLabel) + text(c.textX, 499, c.rspLabel);
            s += poly(c.rsi, c.ox, 370, "#4a80d8", 1.3);
            s += dots(c.highs, c.ox, "#35d445") + dots(c.lows, c.ox, "#c62434");
            s += poly(c.trend, c.ox, 370, "#77735a", 2);
            s += poly(c.rsp, c.ox, 370, "#3f74cc", 1.3);

            // Frame
            s += line(L, c.top, R, c.top, "#9a9a9a") + line(L, 372.5, R, 372.5, "#d8d8d8");
            s += line(L, c.top, L, 602.5, "#cfcfcf") + line(R, c.top, R, 602.5, "#cfcfcf");

            // Price axis
            c.prices.forEach((p, i) => {
                const y = Math.round(98 + i * 32.8);
                s += line(R, y + 0.5, R + 3, y + 0.5, "#cfcfcf") + text(R + 4.5, y + 3, p);
            });
            const ly = Math.round(65 + c.lastY / 3);
            s += `<rect x="${R + 2}" y="${ly - 5}" width="37" height="10" fill="#fff"/>` + text(R + 4.5, ly + 3, "2202.91", "#111");

            // Time axis
            c.times.forEach((t, i) => {
                const x = Math.round(c.ox + c.ticks[i] / 3);
                s += line(x + 0.5, 602, x + 0.5, 605, "#cfcfcf") + text(x - 1, 613, t);
            });

            const svg = document.getElementById(c.id);
            svg.setAttribute("font-family", "Noto Sans, sans-serif");
            svg.setAttribute("font-size", "8");
            svg.innerHTML = s;
        });
    </script>
</body>
</html>
